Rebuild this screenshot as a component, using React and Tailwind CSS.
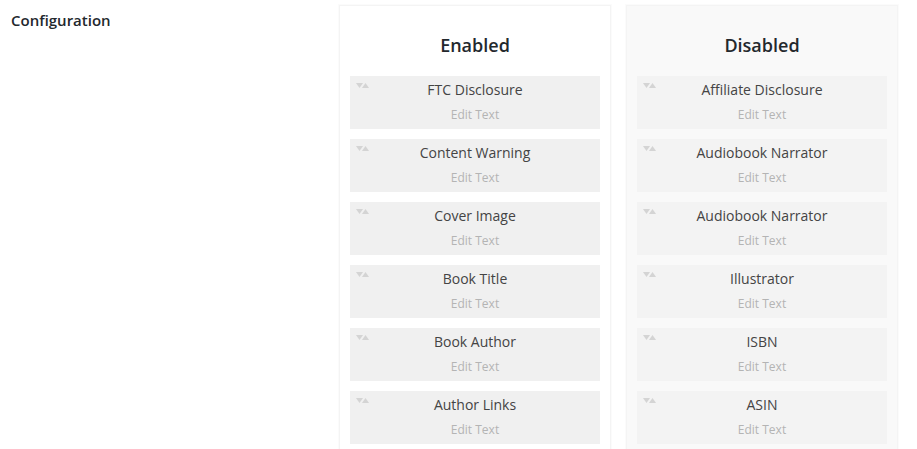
const enabled = ["FTC Disclosure", "Content Warning", "Cover Image", "Book Title", "Book Author", "Author Links"];
const disabled = ["Affiliate Disclosure", "Audiobook Narrator", "Audiobook Narrator", "Illustrator", "ISBN", "ASIN"];

function Item({ label, dim }) {
  return (
    <div className={`relative h-[53px] mb-[10px] flex flex-col items-center text-center ${dim ? "bg-[#f3f3f3]" : "bg-[#f0f0f0]"}`}>
      <svg className="absolute left-[5px] top-[6px]" width="14" height="7" viewBox="0 0 14 7">
        <polygon points="1,1 8,1 4.5,6" fill="#d4d4d4" />
        <polygon points="7,6 14,6 10.5,1" fill="#d4d4d4" />
      </svg>
      <div className="mt-[3px] text-[14px] leading-[22px] text-[#444]">{label}</div>
      <div className="mt-[3px] text-[12px] leading-[22px] text-[#b4b4b4]">Edit Text</div>
    </div>
  );
}

function Panel({ title, items, dim }) {
  return (
    <div className={`w-[272px] h-[460px] border border-[#f4f4f4] shadow-[0_0_0_1px_#fbfbfb] px-[10px] ${dim ? "bg-[#f9f9f9]" : "bg-white"}`}>
      <h2 className="mt-[27px] mb-[18px] h-[25px] text-center text-[18px] leading-[25px] font-semibold text-[#23282d]">{title}</h2>
      {items.map((t, i) => <Item key={i} label={t} dim={dim} />)}
    </div>
  );
}

export default function App() {
  return (
    <div className="h-[449px] w-[917px] overflow-hidden bg-white flex font-['Open_Sans',sans-serif]">
      <div className="w-[339px] pl-[11px] pt-[10px] text-[15px] leading-[20px] font-semibold text-[#23282d]">Configuration</div>
      <div className="flex gap-[15px] pt-[5px]">
        <Panel title="Enabled" items={enabled} />
        <Panel title="Disabled" items={disabled} dim />
      </div>
    </div>
  );
}
